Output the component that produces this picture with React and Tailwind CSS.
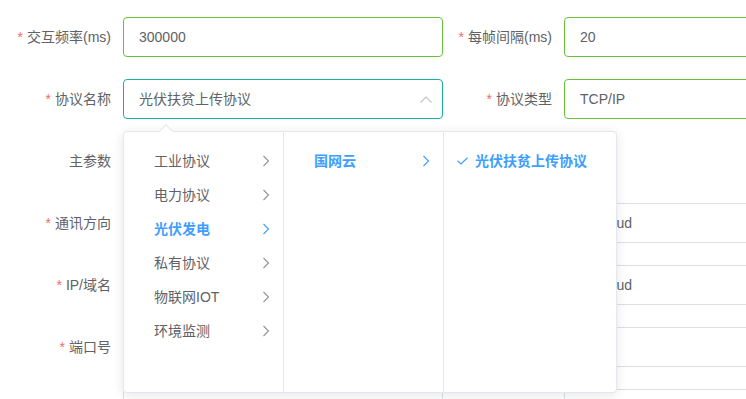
import React from 'react'

const font = { fontFamily: '"Liberation Sans", "Noto Sans CJK SC", sans-serif' }

function Label({ text, req, w }) {
  return (
    <label className={`${w} shrink-0 pr-3 text-right text-[14px] leading-[40px] text-[#606266]`}>
      {req && <span className="mr-1 text-[#f56c6c]">*</span>}
      {text}
    </label>
  )
}

function Input({ value, border = 'border-[#dcdfe6]', children }) {
  return (
    <div className={`relative flex h-[40px] w-[320px] shrink-0 items-center rounded border ${border} bg-white px-[15px] text-[14px] text-[#606266]`}>
      <span>{value}</span>
      {children}
    </div>
  )
}

function Chevron({ color = '#909399' }) {
  return (
    <svg width="8" height="12" viewBox="0 0 8 12" fill="none">
      <path d="M1.5 1 L6.5 6 L1.5 11" stroke={color} strokeWidth="1.1" />
    </svg>
  )
}

const level1 = ['工业协议', '电力协议', '光伏发电', '私有协议', '物联网IOT', '环境监测']

export default function App() {
  return (
    <div className="relative h-[399px] w-[746px] overflow-hidden bg-white" style={font}>
      <div className="flex flex-col gap-[22px] pt-[17px]">
        <div className="flex">
          <Label w="w-[123px]" req text="交互频率(ms)" />
          <Input value="300000" border="border-[#67c23a]" />
          <Label w="w-[121px]" req text="每帧间隔(ms)" />
          <Input value="20" border="border-[#67c23a]" />
        </div>
        <div className="flex">
          <Label w="w-[123px]" req text="协议名称" />
          <Input value="光伏扶贫上传协议" border="border-[#17b3a0]">
            <svg className="absolute right-[10px] top-[16px]" width="12" height="7" viewBox="0 0 12 7" fill="none">
              <path d="M0.5 6.5 L6 1 L11.5 6.5" stroke="#c0c4cc" strokeWidth="1.2" />
            </svg>
          </Input>
          <Label w="w-[121px]" req text="协议类型" />
          <Input value="TCP/IP" border="border-[#67c23a]" />
        </div>
        <div className="flex h-[40px]">
          <Label w="w-[123px]" text="主参数" />
        </div>
        <div className="flex">
          <Label w="w-[123px]" req text="通讯方向" />
          <Input value="" />
          <Label w="w-[121px]" text="" />
          <Input value="AliCloud" />
        </div>
        <div className="flex">
          <Label w="w-[123px]" req text="IP/域名" />
          <Input value="" />
          <Label w="w-[121px]" text="" />
          <Input value="AliCloud" />
        </div>
        <div className="flex">
          <Label w="w-[123px]" req text="端口号" />
          <Input value="" />
          <Label w="w-[121px]" text="" />
          <Input value="" />
        </div>
        <div className="flex">
          <Label w="w-[123px]" text="" />
          <Input value="" />
          <Label w="w-[121px]" text="" />
          <Input value="" />
        </div>
      </div>

      <div className="absolute left-[123px] top-[131px] flex h-[262px] rounded border border-[#e4e7ed] bg-white shadow-[0_2px_12px_rgba(0,0,0,0.1)]">
        <div className="absolute -top-[6px] left-[37px] h-[10px] w-[10px] rotate-45 border-l border-t border-[#e4e7ed] bg-white" />
        <ul className="relative w-[160px] border-r border-[#e4e7ed] pt-[12px]">
          {level1.map((t) => {
            const active = t === '光伏发电'
            return (
              <li key={t} className={`flex h-[34px] items-center justify-between pl-[30px] pr-[13px] text-[14px] ${active ? 'font-bold text-[#409eff]' : 'text-[#606266]'}`}>
                <span>{t}</span>
                <Chevron color={active ? '#409eff' : '#909399'} />
              </li>
            )
          })}
        </ul>
        <ul className="relative w-[160px] border-r border-[#e4e7ed] pt-[12px]">
          <li className="flex h-[34px] items-center justify-between pl-[30px] pr-[13px] text-[14px] font-bold text-[#409eff]">
            <span>国网云</span>
            <Chevron color="#409eff" />
          </li>
        </ul>
        <ul className="relative w-[172px] pt-[12px]">
          <li className="flex h-[34px] items-center gap-[7px] pl-[13px] text-[14px] font-bold text-[#409eff]">
            <svg width="11" height="8" viewBox="0 0 11 8" fill="none">
              <path d="M0.5 3.8 L4 7 L10.5 0.7" stroke="#409eff" strokeWidth="1.2" />
            </svg>
            <span>光伏扶贫上传协议</span>
          </li>
        </ul>
      </div>
    </div>
  )
}
